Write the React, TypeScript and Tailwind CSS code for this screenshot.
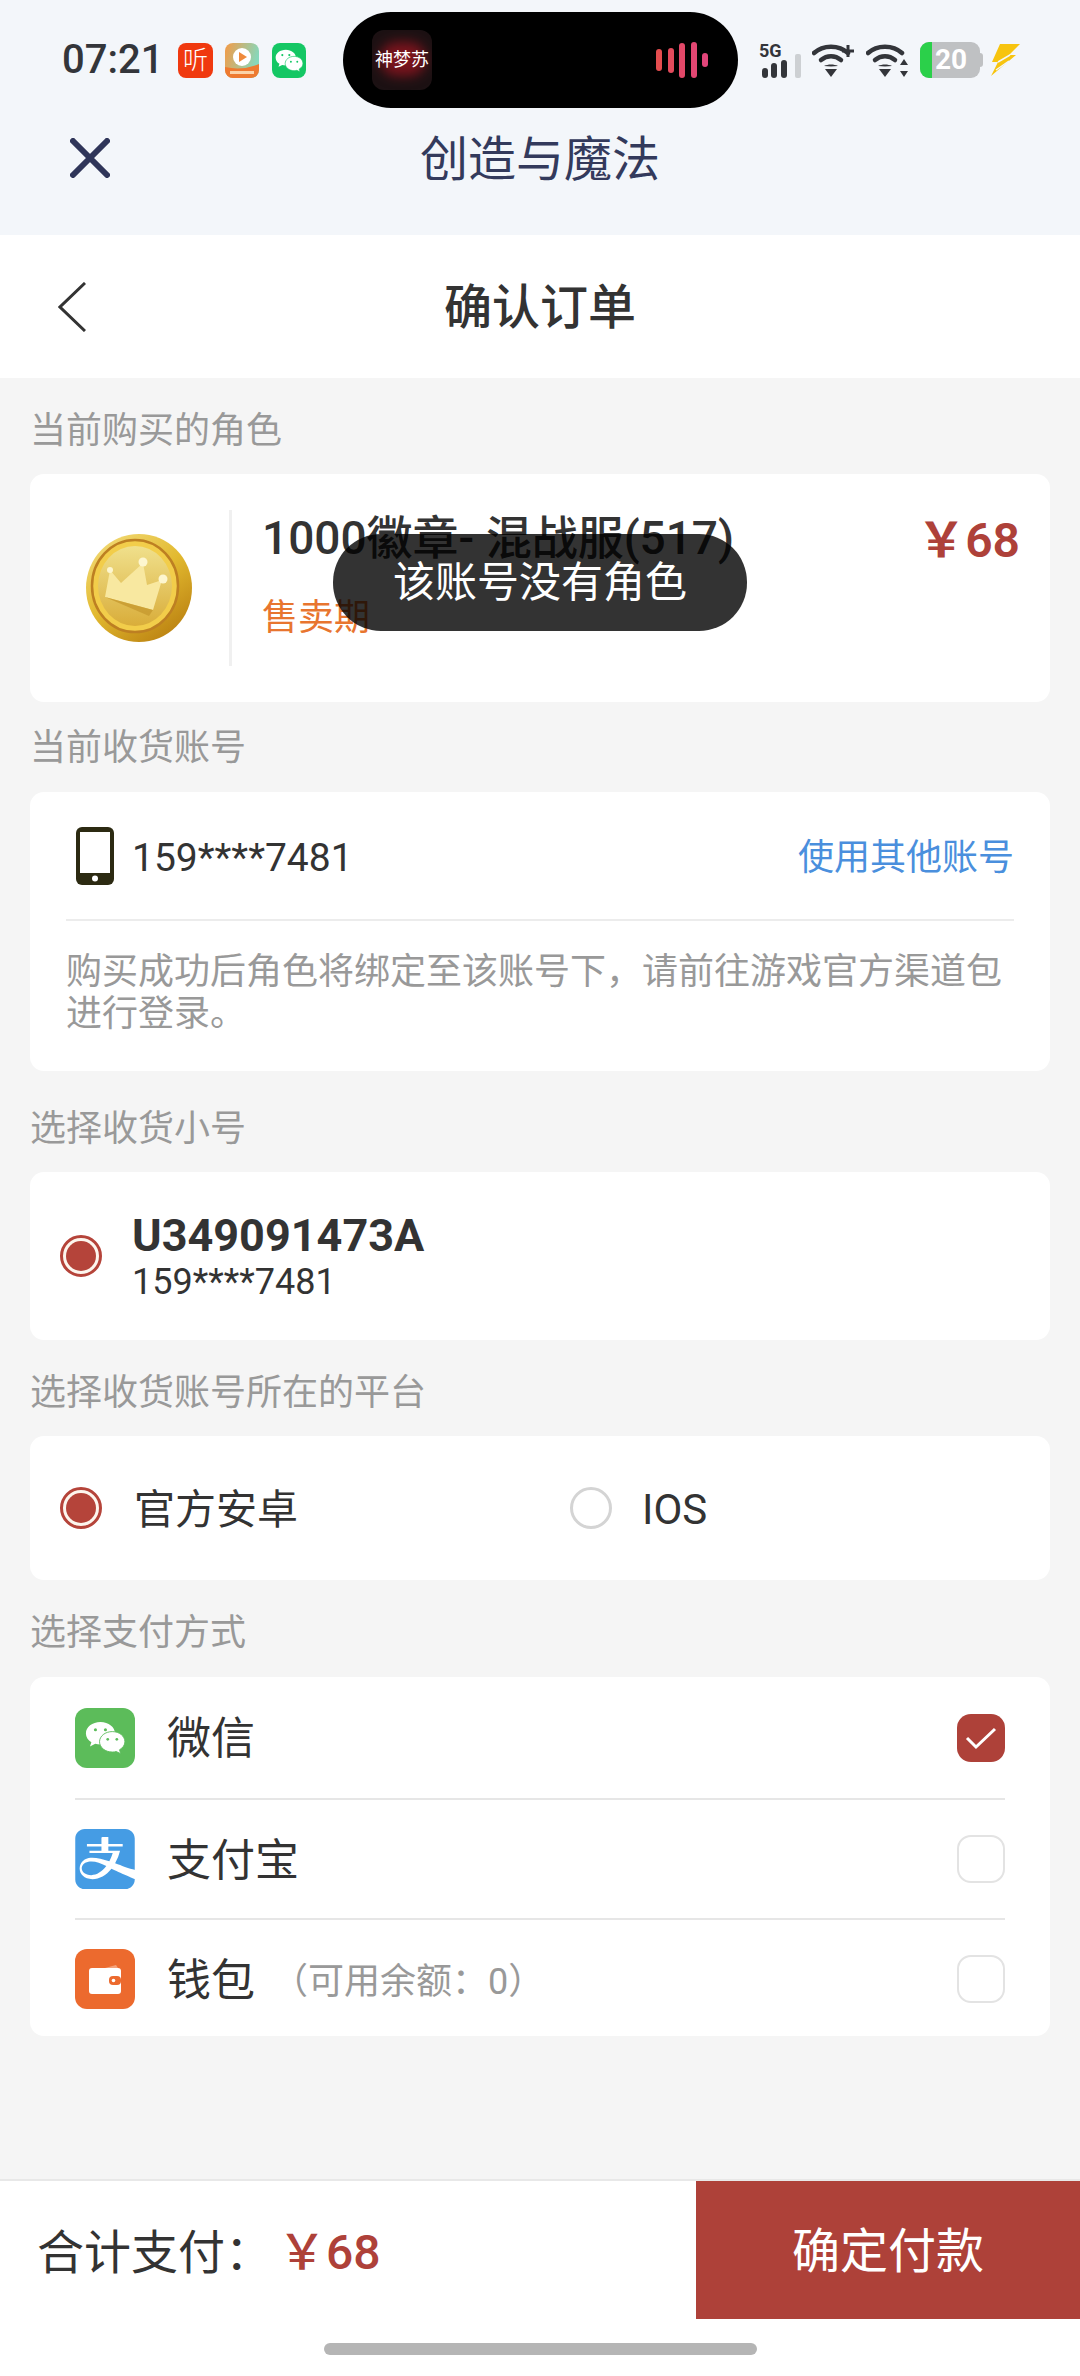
import { FC, ReactNode } from "react";
import { SiAlipay } from "react-icons/si";

const BubblePair: FC<{ eye: string; className?: string }> = ({ eye, className }) => (
  <svg viewBox="0 0 44 36" className={className}>
    <path d="M17 1C8 1 1 6.600 1 13.500c0 4 2.300 7.400 6 9.700L5.500 28l5.800-3c1.800.5 3.700.8 5.700.8 9 0 16-5.600 16-12.300S26 1 17 1z" fill="#fff" />
    <circle cx="11.500" cy="9.500" r="1.700" fill={eye} />
    <circle cx="22.500" cy="9.500" r="1.700" fill={eye} />
    <path d="M30 11.500c-7.800 0-14 5-14 11.200S22.200 34 30 34c1.500 0 3-.2 4.300-.6l5 2.400-1.300-4.300c3.600-2.100 5.900-5.300 5.900-8.800 0-6.200-6.100-11.200-13.900-11.200z" fill="#fff" stroke={eye} strokeWidth="1" />
    <circle cx="25" cy="20" r="1.500" fill={eye} />
    <circle cx="35" cy="20" r="1.500" fill={eye} />
  </svg>
);

const Wifi: FC<{ children?: ReactNode; className?: string }> = ({ children, className }) => (
  <svg viewBox="0 0 44 36" className={className}>
    <g fill="none" stroke="#33353a" strokeWidth="4.500" strokeLinecap="round">
      <path d="M2 11C11 2.500 27 2.500 36 11" />
      <path d="M9 18c6-5 14-5 20 0" />
    </g>
    <path d="M12 24c4-2 10-2 14 0l-7 .5z" fill="#33353a" />
    <path d="M13 27h12l-6 8z" fill="#33353a" />
    {children}
  </svg>
);

const StatusBar: FC = () => (
  <div className="flex h-[36px] items-center justify-between pl-[62px] pr-[60px]">
    <div className="flex items-center">
      <span className="w-[116px] text-[40px] font-medium leading-none text-[#33353a]">07:21</span>
      <div className="flex h-[35px] w-[35px] items-center justify-center rounded-[8px] bg-[#f0390f] text-[25px] font-light leading-none text-white">
        听
      </div>
      <div className="ml-[12px] h-[35px] w-[34px] overflow-hidden rounded-[8px]">
        <svg viewBox="0 0 34 35" className="h-full w-full">
          <defs>
            <linearGradient id="playBg" x1="0" y1="0" x2="1" y2="0.300">
              <stop offset="0" stopColor="#f59a45" />
              <stop offset="1" stopColor="#86d8bb" />
            </linearGradient>
          </defs>
          <rect width="34" height="35" fill="url(#playBg)" />
          <path d="M0 24q17 4 34-3v14H0z" fill="#ee7a30" />
          <circle cx="17" cy="14" r="9" fill="#fff" />
          <path d="M14 9l8 5-8 5z" fill="#ef8a3c" />
          <rect x="5" y="28" width="24" height="3" fill="#fbd3a8" />
        </svg>
      </div>
      <div className="ml-[13px] flex h-[35px] w-[34px] items-center justify-center rounded-[8px] bg-[#14c764]">
        <BubblePair eye="#14c764" className="h-[23px] w-[28px]" />
      </div>
    </div>
    <div className="flex items-center">
      <svg viewBox="0 0 42 36" className="h-[36px] w-[42px]">
        <text x="0" y="15" fontSize="18" fontWeight="700" fill="#33353a" fontFamily="Roboto">5G</text>
        <rect x="3" y="26" width="6" height="10" rx="3" fill="#33353a" />
        <rect x="12" y="21" width="6" height="15" rx="3" fill="#33353a" />
        <rect x="22" y="18" width="6" height="18" rx="3" fill="#33353a" />
        <rect x="36" y="12" width="6" height="24" rx="2" fill="#cdd0d3" />
      </svg>
      <Wifi className="ml-[11px] h-[36px] w-[44px]">
        <path d="M30 9h12M36 3v12" stroke="#33353a" strokeWidth="3" />
      </Wifi>
      <Wifi className="ml-[10px] h-[36px] w-[44px]">
        <path d="M38 17l4 6h-8zM38 35l4-6h-8z" fill="#33353a" />
      </Wifi>
      <div className="ml-[10px] flex h-[36px] w-[60px] overflow-hidden rounded-[9px] bg-[#bfc1c3]">
        <div className="h-full w-[12px] bg-[#2bd04a]" />
        <span className="ml-[3px] text-[28px] font-bold leading-[36px] text-white">20</span>
      </div>
      <div className="h-[14px] w-[3px] rounded-r bg-[#bfc1c3]" />
      <svg viewBox="0 0 30 34" className="ml-[7px] h-[34px] w-[30px]">
        <path d="M10 1h20L19 12h7L1 33l7-14H2z" fill="#f7c40f" />
        <path d="M8 19l12-7M6 27l13-9" stroke="#f3f6fa" strokeWidth="1.500" />
      </svg>
    </div>
  </div>
);

const Island: FC = () => (
  <div className="absolute left-[343px] top-[12px] flex h-[96px] w-[395px] items-center justify-between rounded-[48px] bg-black pl-[29px] pr-[30px]">
    <div className="relative flex h-[60px] w-[60px] items-center justify-center overflow-hidden rounded-[12px] bg-[#1c1113]">
      <div className="absolute left-[8px] top-[12px] h-[34px] w-[46px] rounded-full bg-[#7a141d] blur-[6px]" />
      <span className="relative text-[18px] leading-none text-white">神梦苏</span>
    </div>
    <div className="flex items-center gap-[5.500px]">
      <div className="h-[22px] w-[6px] rounded-full bg-[#e54d4f]" />
      <div className="h-[25px] w-[6px] rounded-full bg-[#e34b5c]" />
      <div className="h-[35px] w-[6px] rounded-full bg-[#e24868]" />
      <div className="h-[36px] w-[6px] rounded-full bg-[#e24672]" />
      <div className="h-[14px] w-[6px] rounded-full bg-[#e1457a]" />
    </div>
  </div>
);

const Coin: FC = () => (
  <svg viewBox="0 0 108 110" className="h-[110px] w-[108px]">
    <defs>
      <linearGradient id="coinRim" x1="0.100" y1="0" x2="0.800" y2="1">
        <stop offset="0" stopColor="#f3dc7a" />
        <stop offset="0.500" stopColor="#e2b92f" />
        <stop offset="1" stopColor="#b97f10" />
      </linearGradient>
      <linearGradient id="coinFace" x1="0" y1="0" x2="0" y2="1">
        <stop offset="0" stopColor="#f0e08c" />
        <stop offset="1" stopColor="#d9ad3a" />
      </linearGradient>
    </defs>
    <ellipse cx="54" cy="55" rx="53" ry="54" fill="url(#coinRim)" />
    <ellipse cx="50" cy="53" rx="43" ry="46" fill="#f2cd4a" stroke="#bd7f22" strokeWidth="2.500" />
    <ellipse cx="50" cy="53" rx="37" ry="40" fill="url(#coinFace)" />
    <path d="M25 37l11 13 22-20 4 22 15-5-9 30-48-13z" fill="#f8e8a0" />
    <path d="M20 64l48 13-4 6z" fill="#c79a30" opacity="0.800" />
    <circle cx="58" cy="29" r="4.500" fill="#fdf6cf" />
    <circle cx="78" cy="46" r="4.500" fill="#fdf6cf" />
    <circle cx="25" cy="37" r="3" fill="#fdf6cf" />
  </svg>
);

const Radio: FC<{ on?: boolean }> = ({ on }) =>
  on ? (
    <div className="flex h-[42px] w-[42px] shrink-0 items-center justify-center rounded-full border-[3px] border-[#b5443a] bg-[#fdf6ee]">
      <div className="h-[30px] w-[30px] rounded-full bg-[#b5443a]" />
    </div>
  ) : (
    <div className="h-[42px] w-[42px] shrink-0 rounded-full border-[3px] border-[#d4d4d4] bg-white" />
  );

const Check: FC<{ on?: boolean }> = ({ on }) =>
  on ? (
    <div className="flex h-[48px] w-[48px] items-center justify-center rounded-[14px] bg-[#ae4139]">
      <svg viewBox="0 0 32 24" className="h-[24px] w-[32px]">
        <path d="M2 12l9 9L30 3" fill="none" stroke="#fff" strokeWidth="3" />
      </svg>
    </div>
  ) : (
    <div className="h-[48px] w-[48px] rounded-[14px] border-[2px] border-[#e3e3e3] bg-white" />
  );

const Label: FC<{ className: string; children: ReactNode }> = ({ className, children }) => (
  <div className={`px-[30px] text-[36px] leading-[40px] text-[#999999] ${className}`}>{children}</div>
);

const Card: FC<{ className: string; children: ReactNode }> = ({ className, children }) => (
  <div className={`mx-[30px] rounded-[14px] bg-white ${className}`}>{children}</div>
);

const PayRow: FC<{ icon: ReactNode; name: string; extra?: string; on?: boolean; className: string }> = ({
  icon,
  name,
  extra,
  on,
  className,
}) => (
  <div className={`flex items-center ${className}`}>
    {icon}
    <span className="ml-[32px] pt-[3px] text-[44px] leading-none text-[#333333]">{name}</span>
    {extra && <span className="ml-[17px] pt-[5px] text-[36px] leading-none text-[#999999]">{extra}</span>}
    <div className="ml-auto">
      <Check on={on} />
    </div>
  </div>
);

const App: FC = () => {
  return (
    <div
      className="relative flex h-[2376px] w-[1080px] flex-col overflow-hidden bg-[#f5f5f5]"
      style={{ fontFamily: 'Roboto, "Noto Sans CJK SC", sans-serif' }}
    >
      <div className="h-[235px] shrink-0 bg-[#f3f6fa] pt-[42px]">
        <StatusBar />
        <div className="mt-[50px] grid h-[60px] grid-cols-[1fr_auto_1fr] items-center">
          <svg viewBox="0 0 40 40" className="ml-[70px] h-[40px] w-[40px]">
            <path d="M3 3l34 34M37 3L3 37" stroke="#2f3559" strokeWidth="6" strokeLinecap="round" />
          </svg>
          <span className="pt-[3px] text-[48px] leading-none text-[#333a5c]">创造与魔法</span>
        </div>
      </div>
      <Island />

      <div className="grid h-[143px] shrink-0 grid-cols-[1fr_auto_1fr] items-center bg-white">
        <svg viewBox="0 0 28 50" className="ml-[58px] h-[50px] w-[28px]">
          <path d="M27 1L2 25l25 24" fill="none" stroke="#333333" strokeWidth="3" />
        </svg>
        <span className="pt-[3px] text-[48px] font-medium leading-none text-[#333333]">确认订单</span>
      </div>

      <Label className="pt-[33px] pb-[23px]">当前购买的角色</Label>
      <Card className="flex h-[228px] items-center">
        <div className="ml-[55px] w-[144px]">
          <Coin />
        </div>
        <div className="h-[156px] w-[3px] bg-[#f0f0f0]" />
        <div className="ml-[30px] flex h-full flex-1 flex-col pt-[36px]">
          <div className="flex items-start justify-between pr-[30px]">
            <span className="text-[46px] font-medium leading-[56px] text-[#333333]">1000徽章- 混战服(517)</span>
            <span className="mt-[3px] text-[48px] font-semibold leading-[56px] text-[#ae4139]">￥68</span>
          </div>
          <span className="mt-[29px] text-[36px] leading-[40px] text-[#e8752f]">售卖期</span>
        </div>
      </Card>

      <Label className="pt-[26px] pb-[24px]">当前收货账号</Label>
      <Card className="h-[279px] px-[36px]">
        <div className="flex h-[129px] items-center border-b-[2px] border-[#ececec] pl-[10px]">
          <svg viewBox="0 0 38 58" className="h-[58px] w-[38px]">
            <rect width="38" height="58" rx="6" fill="#2c2a12" />
            <rect x="4" y="5" width="30" height="41" fill="#fff" />
            <circle cx="19" cy="51.500" r="3" fill="#fff" />
          </svg>
          <span className="ml-[18px] pt-[5px] text-[39px] leading-none text-[#333333]">159****7481</span>
          <span className="ml-auto pt-[5px] text-[36px] leading-none text-[#4a8fdd]">使用其他账号</span>
        </div>
        <p className="pt-[30px] text-[36px] leading-[42px] text-[#999999]">
          购买成功后角色将绑定至该账号下，请前往游戏官方渠道包进行登录。
        </p>
      </Card>

      <Label className="pt-[38px] pb-[23px]">选择收货小号</Label>
      <Card className="flex h-[168px] items-center pl-[30px]">
        <Radio on />
        <div className="ml-[30px] flex flex-col">
          <span className="text-[45px] font-bold leading-[50px] text-[#333333]">U349091473A</span>
          <span className="pt-[2px] text-[36px] leading-[38px] text-[#333333]">159****7481</span>
        </div>
      </Card>

      <Label className="pt-[33px] pb-[23px]">选择收货账号所在的平台</Label>
      <Card className="flex h-[144px] items-center pl-[30px]">
        <div className="flex w-[510px] items-center">
          <Radio on />
          <span className="ml-[32px] pt-[4px] text-[41px] leading-none text-[#333333]">官方安卓</span>
        </div>
        <Radio />
        <span className="ml-[30px] pt-[4px] text-[42px] leading-none text-[#333333]">IOS</span>
      </Card>

      <Label className="pt-[33px] pb-[24px]">选择支付方式</Label>
      <Card className="flex h-[359px] flex-col px-[45px]">
        <PayRow
          className="h-[123px] border-b-[2px] border-[#e6e6e6]"
          on
          name="微信"
          icon={
            <div className="flex h-[60px] w-[60px] items-center justify-center rounded-[12px] bg-[#5cbc5a]">
              <BubblePair eye="#5cbc5a" className="h-[33px] w-[40px]" />
            </div>
          }
        />
        <PayRow
          className="h-[120px] border-b-[2px] border-[#e6e6e6]"
          name="支付宝"
          icon={<SiAlipay className="h-[60px] w-[60px] text-[#459ce4]" />}
        />
        <PayRow
          className="flex-1 pt-[2px]"
          name="钱包"
          extra="（可用余额：0）"
          icon={
            <div className="flex h-[60px] w-[60px] items-center justify-center rounded-[12px] bg-[#ec6a2e]">
              <svg viewBox="0 0 32 30" className="h-[30px] w-[32px]">
                <path d="M16 4l11-3 2 3z" fill="#f5a27a" />
                <rect y="4" width="32" height="26" rx="3" fill="#fff" />
                <rect x="20" y="12" width="12" height="9" rx="4" fill="#ec6a2e" />
                <circle cx="24.500" cy="16.500" r="1.800" fill="#fff" />
              </svg>
            </div>
          }
        />
      </Card>

      <div className="mt-auto h-[197px] shrink-0 border-t-[2px] border-[#e8e8e8] bg-white">
        <div className="flex h-[138px]">
          <div className="flex flex-1 items-center pl-[37px]">
            <span className="pt-[5px] text-[47px] leading-none text-[#333333]">合计支付：</span>
            <span className="ml-[6px] pt-[5px] text-[48px] font-medium leading-none text-[#ae4139]">￥68</span>
          </div>
          <div className="flex w-[384px] items-center justify-center bg-[#ae4139] pt-[4px] text-[48px] leading-none text-white">
            确定付款
          </div>
        </div>
        <div className="mx-auto mt-[24px] h-[12px] w-[433px] rounded-full bg-[#b5b5b5]" />
      </div>

      <div className="absolute left-[333px] top-[534px] flex h-[97px] w-[414px] items-center justify-center rounded-[48px] bg-black/80 text-[42px] leading-none text-white">
        该账号没有角色
      </div>
    </div>
  );
};

export default App;
